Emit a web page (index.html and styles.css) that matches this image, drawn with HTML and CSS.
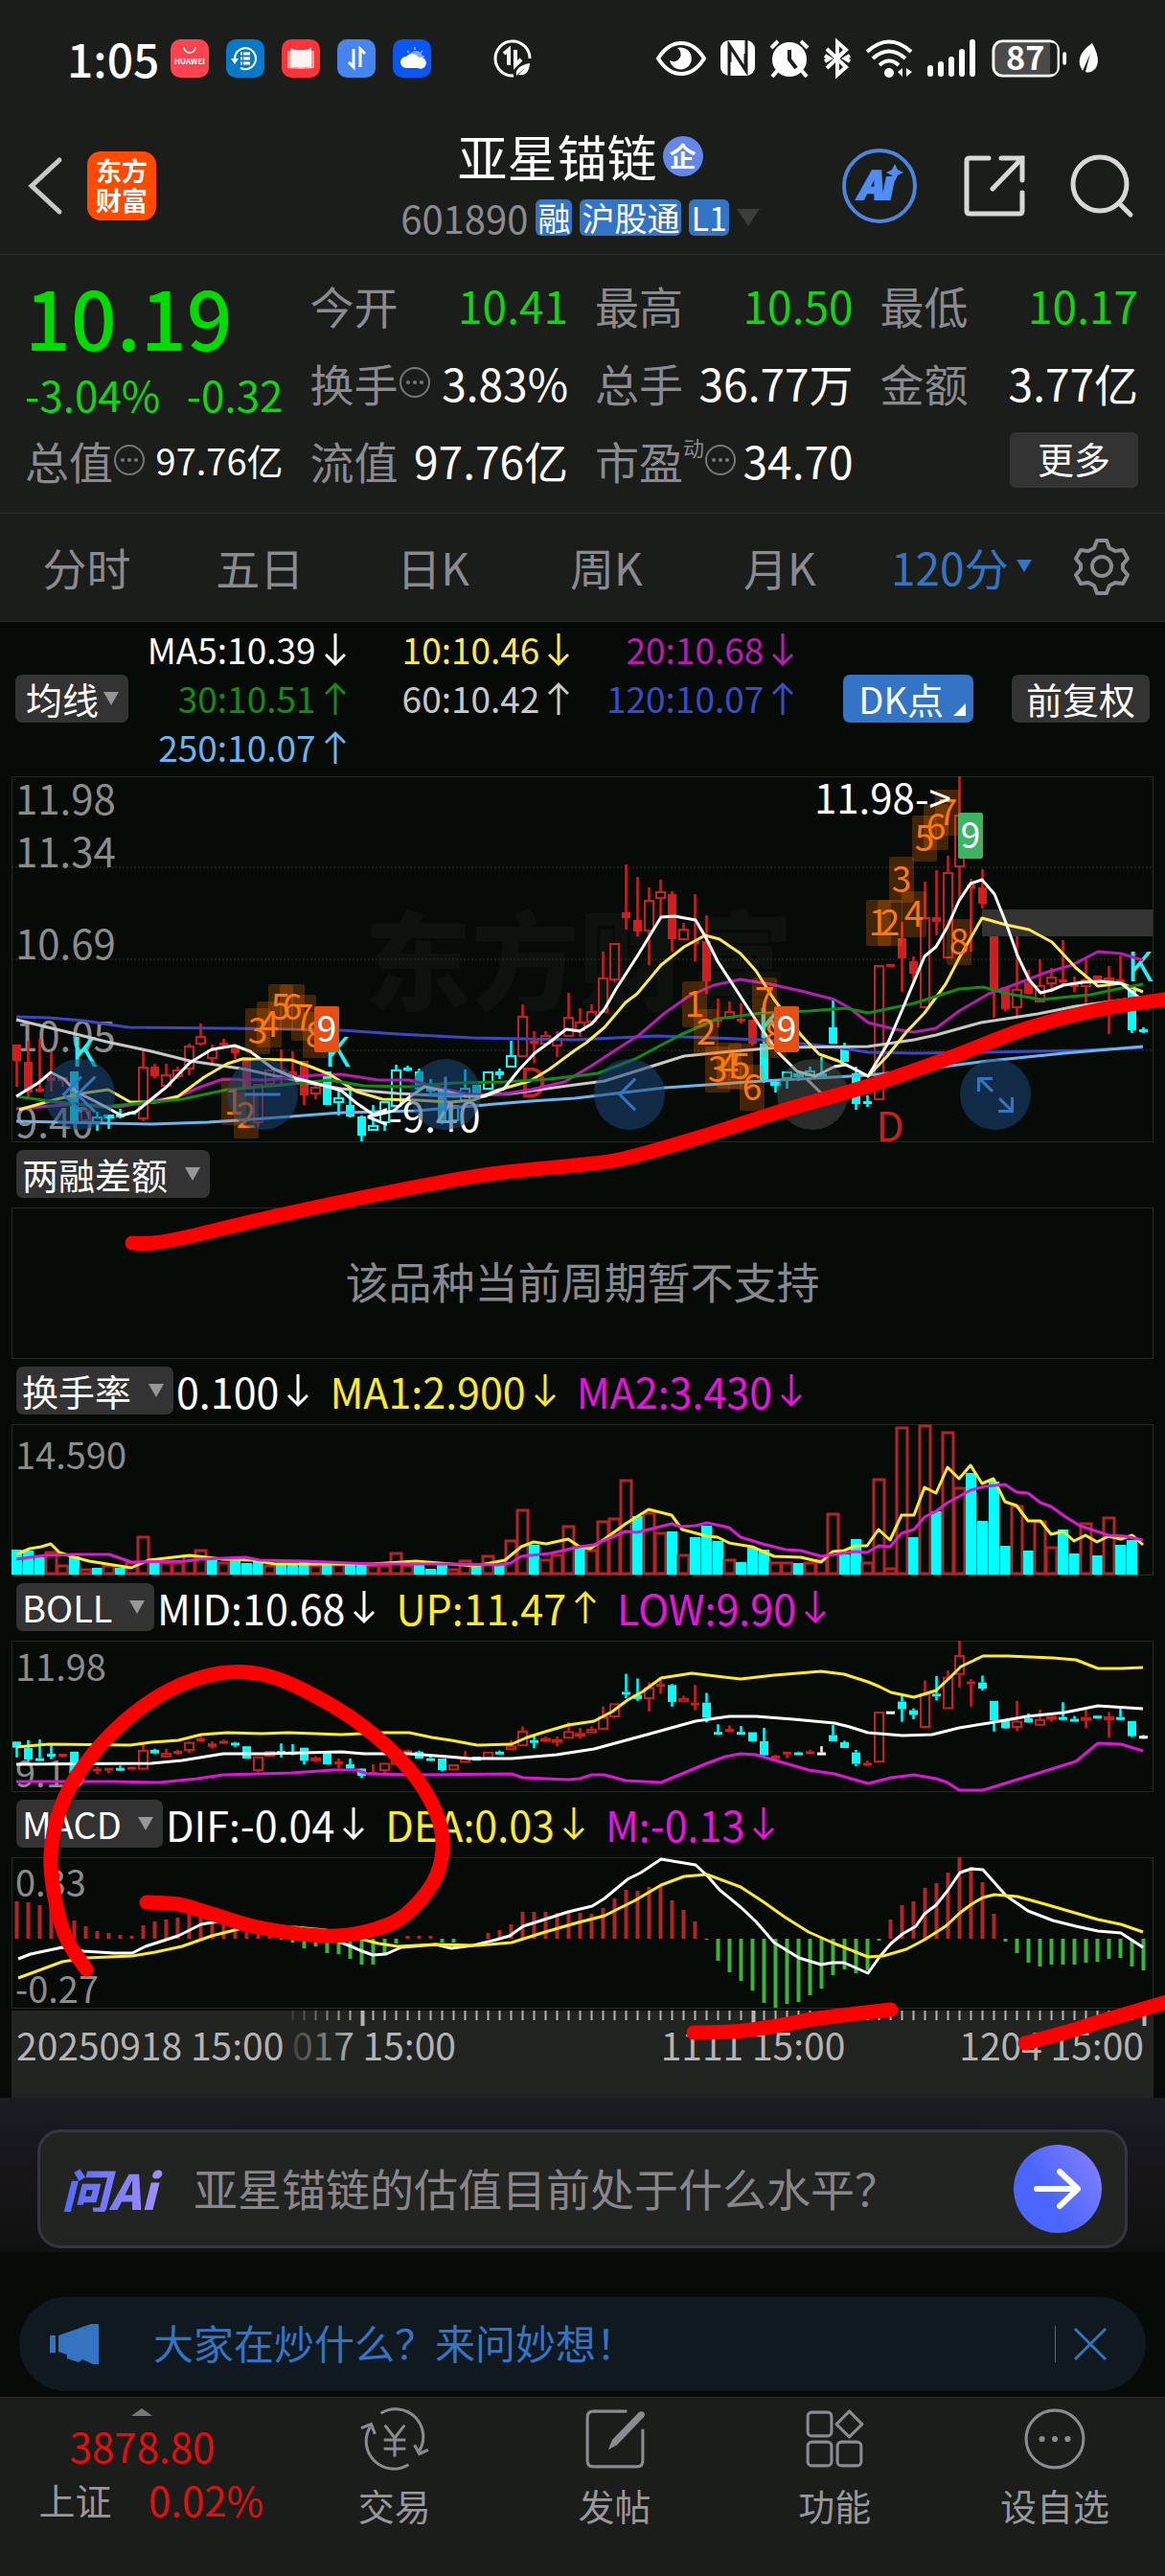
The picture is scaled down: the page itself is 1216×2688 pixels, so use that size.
FILE: index.html
```html
<!DOCTYPE html>
<html lang="zh-CN">
<head>
    <meta charset="UTF-8">
    <meta name="viewport" content="width=device-width, initial-scale=1.0">
    <title>亚星锚链 601890</title>
    <link rel="stylesheet" href="styles.css">
</head>
<body>
    <svg class="symbols" aria-hidden="true">
        <symbol id="down" viewBox="0 0 22 36"><path d="M11 1v32M1 23l10 10 10-10" fill="none" stroke="currentColor" stroke-width="3"/></symbol>
        <symbol id="up" viewBox="0 0 22 36"><path d="M11 35V3M1 13L11 3l10 10" fill="none" stroke="currentColor" stroke-width="3"/></symbol>
        <symbol id="info" viewBox="0 0 34 34"><circle cx="17" cy="17" r="15" fill="none" stroke="currentColor" stroke-width="2"/><circle cx="10" cy="17" r="2" fill="currentColor"/><circle cx="17" cy="17" r="2" fill="currentColor"/><circle cx="24" cy="17" r="2" fill="currentColor"/></symbol>
    </svg>

    <div class="status-bar">
        <span class="clock">1:05</span>
        <div class="app-icons">
            <svg viewBox="0 0 40 40"><rect width="40" height="40" rx="10" fill="#fb444f"/><path d="M14 8a6 6 0 0 0 12 0" fill="none" stroke="#fff" stroke-width="1.5"/><text x="20" y="26" font-size="8" font-weight="bold" fill="#fff" text-anchor="middle">HUAWEI</text></svg>
            <svg viewBox="0 0 40 40"><rect width="40" height="40" rx="10" fill="#067ac6"/><path d="M9 21a11 11 0 1 1 6 9" fill="none" stroke="#fff" stroke-width="2"/><path d="M5 20h8l-4 6z" fill="#fff"/><path d="M15 15h2M15 20h2M15 25h2M18 15h7M18 20h7M18 25h7" stroke="#fff" stroke-width="3"/></svg>
            <svg viewBox="0 0 40 40"><rect width="40" height="40" rx="10" fill="#fc3439"/><path d="M6 12h28v18q-7 1-14 1t-14-1z" fill="#ff9a96"/><path d="M9 9q5 3 11 2 6 1 11-2v21q-6-2-11 0-5-2-11 0z" fill="#fff4f0"/></svg>
            <svg viewBox="0 0 40 40"><rect width="40" height="40" rx="10" fill="#4684ee"/><path d="M17 10v19l-5-5M24 29V10l5 5" fill="none" stroke="#fff" stroke-width="3"/></svg>
            <svg viewBox="0 0 40 40"><rect width="40" height="40" rx="10" fill="#0b57f3"/><circle cx="24" cy="19" r="7" fill="#7da9f8"/><path d="M23 8v3M15 12l2 2M31 12l-2 2M30 18h3" stroke="#9dbdf9" stroke-width="1.5"/><path d="M14 30a6 6 0 0 1 0-12 8 8 0 0 1 13 1 6 6 0 1 1-1 11z" fill="#fff"/></svg>
        </div>
        <svg class="data-saver" viewBox="0 0 40 40"><path d="M38 20A18 18 0 1 0 21 38" fill="none" stroke="#fff" stroke-width="3"/><path d="M11 15l5-4v16M23 11v16l6-6" fill="none" stroke="#fff" stroke-width="4"/><path d="M24 38q-2-10 14-13-1 14-12 12l8-8-8 7z" fill="#fff"/></svg>
        <div class="status-icons">
            <svg class="w52" viewBox="0 0 52 40"><path d="M2 20Q12 4 26 4t24 16Q40 36 26 36T2 20z" fill="none" stroke="#fff" stroke-width="4"/><path d="M22 9a11.500 11.500 0 1 1-8 13 7 7 0 0 0 8-13z" fill="#fff"/></svg>
            <svg class="w36" viewBox="0 0 36 40"><rect y="1" width="36" height="37" rx="9" fill="#fff"/><path d="M9 38V6l17 26V15M27 1v32L10 7v17" fill="none" stroke="#1a1d1a" stroke-width="3"/></svg>
            <svg class="w42" viewBox="0 0 42 40"><circle cx="21" cy="21" r="18" fill="#fff"/><path d="M2 9l7-7M40 9l-7-7M8 33l-5 6M34 33l5 6" stroke="#fff" stroke-width="4"/><path d="M21 11v10l7 9" fill="none" stroke="#1a1d1a" stroke-width="4"/></svg>
            <svg class="w28" viewBox="0 0 28 40"><path d="M3 10l20 19-9 8V3l9 8L3 30M1 17l5 3-5 3M27 17l-5 3 5 3" fill="none" stroke="#fff" stroke-width="4"/></svg>
            <svg class="w50" viewBox="0 0 50 40"><path d="M2 13q23-21 46 0M8 20q17-15 34 0M15 27q10-9 20 0" fill="none" stroke="#fff" stroke-width="4"/><circle cx="25" cy="35" r="5" fill="#fff"/><path d="M34 34l5-4v9M43 30v9l6-5z" fill="#fff"/></svg>
            <svg class="w50" viewBox="0 0 50 40"><path d="M3 30v6M14 26v10M25 21v15M36 13v23M47 3v33" stroke="#fff" stroke-width="6" stroke-linecap="round"/></svg>
            <svg class="w84" viewBox="0 0 84 42"><rect x="2" y="2" width="71" height="38" rx="10" fill="#4b4b4b" stroke="#fff" stroke-width="3"/><path d="M64 4h2q6 0 6 7v20q0 7-6 7h-2z" fill="#1a1d1a"/><path d="M80 16v10" stroke="#fff" stroke-width="4" stroke-linecap="round"/><text x="37" y="34" font-size="36" font-weight="bold" fill="#fff" text-anchor="middle">87</text></svg>
            <svg class="w22" viewBox="0 0 22 40"><path d="M16 4q10 18 3 27-5 5-10 3l5-19L6 33Q-4 18 16 4z" fill="#fff"/></svg>
        </div>
    </div>

    <header class="top-bar">
        <div class="top-left">
            <button class="icon-btn" aria-label="返回"><svg class="back" viewBox="0 0 36 60"><path d="M33 3L4 30l29 27" fill="none" stroke="#c8c8c8" stroke-width="5" stroke-linecap="round"/></svg></button>
            <a class="logo" href="#">东方<br>财富</a>
        </div>
        <div class="stock">
            <h1>亚星锚链<span class="corp">企</span></h1>
            <div class="stock-code">
                <span>601890</span>
                <span class="tag">融</span><span class="tag">沪股通</span><span class="tag">L1</span>
                <i class="caret"></i>
            </div>
        </div>
        <div class="top-right">
            <button class="icon-btn" aria-label="AI"><svg class="ai-icon" viewBox="0 0 80 80"><circle cx="40" cy="40" r="37" fill="none" stroke="#4a86e0" stroke-width="4"/><text class="ai-text" x="36" y="54" font-size="40" text-anchor="middle">Aı</text><path d="M56 17l3 6 6 3-6 3-3 6-3-6-6-3 6-3z" fill="#4f8df0"/></svg></button>
            <button class="icon-btn" aria-label="分享"><svg class="tool" viewBox="0 0 64 64"><path d="M26 3H6q-3 0-3 3v52q0 3 3 3h52q3 0 3-3V39M61 26V3H39M61 3L30 35" fill="none" stroke="#d8d8d8" stroke-width="5" stroke-linecap="round"/></svg></button>
            <button class="icon-btn" aria-label="搜索"><svg class="tool" viewBox="0 0 64 64"><circle cx="30" cy="30" r="28" fill="none" stroke="#d8d8d8" stroke-width="5"/><path d="M50 50l12 12" stroke="#d8d8d8" stroke-width="5" stroke-linecap="round"/></svg></button>
        </div>
    </header>

    <section class="quote">
        <div class="price">
            <strong>10.19</strong>
            <div class="change"><span>-3.04%</span><span>-0.32</span></div>
        </div>
        <div class="cell"><span>今开</span><b class="green">10.41</b></div>
        <div class="cell"><span>最高</span><b class="green">10.50</b></div>
        <div class="cell"><span>最低</span><b class="green">10.17</b></div>
        <div class="cell"><span>换手</span><svg class="info"><use href="#info"/></svg><b>3.83%</b></div>
        <div class="cell"><span>总手</span><b>36.77万</b></div>
        <div class="cell"><span>金额</span><b>3.77亿</b></div>
        <div class="cell"><span>总值</span><svg class="info"><use href="#info"/></svg><b class="small">97.76亿</b></div>
        <div class="cell"><span>流值</span><b>97.76亿</b></div>
        <div class="cell"><span>市盈<sup>动</sup></span><svg class="info"><use href="#info"/></svg><b>34.70</b></div>
        <div class="cell"><button class="more">更多</button></div>
    </section>

    <nav class="tabs">
        <a href="#">分时</a>
        <a href="#">五日</a>
        <a href="#">日K</a>
        <a href="#">周K</a>
        <a href="#">月K</a>
        <span class="period"><select aria-label="周期"><option>120分</option></select></span>
        <button class="icon-btn" aria-label="设置"><svg class="gear" viewBox="0 0 60 60"><path d="M25 3h10l3 8 6 3 8-1 5 9-5 6v5l5 6-5 9-8-1-6 3-3 8H25l-3-8-6-3-8 1-5-9 5-6v-5l-5-6 5-9 8 1 6-3z" fill="none" stroke="#8a8a90" stroke-width="4" stroke-linejoin="round"/><circle cx="30" cy="30" r="10" fill="none" stroke="#8a8a90" stroke-width="4"/></svg></button>
    </nav>

    <main>
        <div class="ma-row">
            <span class="picker tight"><select aria-label="主图指标"><option>均线</option></select></span>
            <div class="ma-list">
                <span class="c-white">MA5:10.39<svg class="arrow"><use href="#down"/></svg></span>
                <span class="c-ma10">10:10.46<svg class="arrow"><use href="#down"/></svg></span>
                <span class="c-ma20">20:10.68<svg class="arrow"><use href="#down"/></svg></span>
                <span class="c-ma30">30:10.51<svg class="arrow"><use href="#up"/></svg></span>
                <span class="c-ma60">60:10.42<svg class="arrow"><use href="#up"/></svg></span>
                <span class="c-ma120">120:10.07<svg class="arrow"><use href="#up"/></svg></span>
                <span class="c-ma250">250:10.07<svg class="arrow"><use href="#up"/></svg></span>
            </div>
            <button class="chip dk">DK点</button>
            <button class="chip">前复权</button>
        </div>
        <div class="frame main-frame">
            <svg id="kline" viewBox="13 1 1190 380"></svg>
            <div class="chart-tools">
                <button aria-label="最早"><svg viewBox="0 0 72 72"><path d="M38 18L20 36l18 18M52 18L34 36l18 18"/></svg></button>
                <button aria-label="缩小"><svg viewBox="0 0 72 72"><path d="M18 36h36"/></svg></button>
                <button aria-label="放大"><svg viewBox="0 0 72 72"><path d="M18 36h36M36 18v36"/></svg></button>
                <button aria-label="左移"><svg viewBox="0 0 72 72"><path d="M42 20L26 36l16 16"/></svg></button>
                <button class="off" aria-label="右移"><svg viewBox="0 0 72 72"><path d="M30 20l16 16-16 16"/></svg></button>
                <button aria-label="全屏"><svg viewBox="0 0 72 72"><path d="M19 33V20h14M20 20l13 13M53 39v14H39M53 53L40 40"/></svg></button>
            </div>
        </div>

        <div class="ind-head">
            <span class="picker"><select aria-label="副图一"><option>两融差额</option></select></span>
        </div>
        <div class="frame empty">该品种当前周期暂不支持</div>

        <div class="ind-head">
            <span class="picker"><select aria-label="副图二"><option>换手率</option></select></span>
            <span class="c-white">0.100<svg class="arrow"><use href="#down"/></svg></span>
            <span class="c-yellow">MA1:2.900<svg class="arrow"><use href="#down"/></svg></span>
            <span class="c-pink">MA2:3.430<svg class="arrow"><use href="#down"/></svg></span>
        </div>
        <div class="frame"><svg id="turnover" viewBox="13 1 1190 156"></svg></div>

        <div class="ind-head">
            <span class="picker"><select aria-label="副图三"><option>BOLL</option></select></span>
            <span class="c-white">MID:10.68<svg class="arrow"><use href="#down"/></svg></span>
            <span class="c-yellow">UP:11.47<svg class="arrow"><use href="#up"/></svg></span>
            <span class="c-pink">LOW:9.90<svg class="arrow"><use href="#down"/></svg></span>
        </div>
        <div class="frame"><svg id="boll" viewBox="13 1 1190 156"></svg></div>

        <div class="ind-head">
            <span class="picker"><select aria-label="副图四"><option>MACD</option></select></span>
            <span class="c-white">DIF:-0.04<svg class="arrow"><use href="#down"/></svg></span>
            <span class="c-yellow">DEA:0.03<svg class="arrow"><use href="#down"/></svg></span>
            <span class="c-pink">M:-0.13<svg class="arrow"><use href="#down"/></svg></span>
        </div>
        <div class="frame"><svg id="macd" viewBox="13 1 1190 156"></svg></div>
        <div class="time-axis"><svg id="axis" viewBox="12 0 1192 91"></svg></div>
    </main>

    <section class="ask">
        <form class="ask-box">
            <label class="ask-logo" for="question">问Ai</label>
            <input type="text" id="question" placeholder="亚星锚链的估值目前处于什么水平？">
            <button type="button" aria-label="发送"><svg viewBox="0 0 92 92"><path d="M24 46h42M48 28l19 18-19 18" fill="none" stroke="#fff" stroke-width="6" stroke-linecap="round" stroke-linejoin="round"/></svg></button>
        </form>
    </section>

    <aside class="notice">
        <svg class="horn" viewBox="0 0 52 44"><path d="M0 13h6v18H0zM9 13l34-12h8v42h-6l-11-5-4 3-12-4v-4l-9-3z" fill="#3373c0"/></svg>
        <a href="#">大家在炒什么？来问妙想！</a>
        <button class="icon-btn close" aria-label="关闭"><svg viewBox="0 0 36 36"><path d="M2 2l32 32M34 2L2 34" stroke="#3373c0" stroke-width="3"/></svg></button>
    </aside>

    <footer class="bottom-nav">
        <a class="index" href="#">
            <i class="caret-up"></i>
            <b>3878.80</b>
            <span>上证</span><em>0.02%</em>
        </a>
        <a href="#"><svg viewBox="0 0 70 64"><path d="M21 6a28 28 0 0 1 39 38M49 58A28 28 0 0 1 10 20M1 21l10-4 4 10M69 43l-9 4-5-9M25 18l10 13 10-13M35 31v19M24 33h22M24 42h22" fill="none" stroke="#8a8a90" stroke-width="3"/></svg>交易</a>
        <a href="#"><svg viewBox="0 0 64 64"><path d="M44 4H10q-6 0-6 6v44q0 6 6 6h44q6 0 6-6V22" fill="none" stroke="#8a8a90" stroke-width="3"/><path d="M25 43l4-10L56 5q3-2 5 0t0 5L34 38z" fill="#8a8a90"/></svg>发帖</a>
        <a href="#"><svg viewBox="0 0 64 64"><g fill="none" stroke="#8a8a90" stroke-width="3"><rect x="5" y="5" width="24" height="24" rx="4"/><rect x="5" y="35" width="24" height="24" rx="4"/><rect x="35" y="35" width="24" height="24" rx="4"/><path d="M47 4l13 13-13 13-13-13z" stroke-linejoin="round"/></g></svg>功能</a>
        <a href="#"><svg viewBox="0 0 64 64"><circle cx="32" cy="32" r="29" fill="none" stroke="#8a8a90" stroke-width="3"/><g fill="#8a8a90"><circle cx="19" cy="32" r="3"/><circle cx="32" cy="32" r="3"/><circle cx="45" cy="32" r="3"/></g></svg>设自选</a>
    </footer>

    <svg id="marker" class="marker" viewBox="0 0 1216 2688" aria-hidden="true"></svg>

    <script src="script.js"></script>
</body>
</html>
```
FILE: styles.css
```css
:root {
    --panel: #1a1d1a;
    --bg: #060b08;
    --line: #2b2d2b;
    --muted: #8a8a90;
    --blue: #3375c4;
    --green: #12d412;
    --chip: #333333;
}

* {
    margin: 0;
    padding: 0;
    box-sizing: border-box;
}

body {
    position: relative;
    background-color: var(--bg);
    color: #fff;
    font-family: "Noto Sans CJK SC", "Noto Sans", sans-serif;
    font-size: 38px;
    line-height: 48px;
}

a {
    color: inherit;
    text-decoration: none;
}

button, select, input {
    font: inherit;
    color: inherit;
    background: none;
    border: none;
    outline: none;
}

select {
    appearance: none;
}

svg {
    display: block;
    overflow: visible;
}

.symbols {
    position: absolute;
    width: 0;
    height: 0;
}

.icon-btn {
    display: flex;
    align-items: center;
    justify-content: center;
}

/* status bar */
.status-bar {
    display: flex;
    align-items: center;
    height: 122px;
    padding: 0 70px;
    background-color: var(--panel);
}

.status-bar svg {
    height: 40px;
}

.clock {
    width: 108px;
    padding-bottom: 3px;
    font-size: 48px;
    font-weight: 500;
}

.app-icons {
    display: flex;
    gap: 18px;
}

.app-icons svg {
    width: 40px;
}

.data-saver {
    width: 40px;
    margin-left: 65px;
}

.status-icons {
    display: flex;
    gap: 15px;
    margin-left: auto;
}

.w22 { width: 22px; margin-left: -8px; }
.w28 { width: 28px; }
.w36 { width: 36px; }
.w42 { width: 42px; }
.w50 { width: 50px; }
.w52 { width: 52px; }
.w84 { width: 84px; }

/* title bar */
.top-bar {
    display: grid;
    grid-template-columns: 1fr auto 1fr;
    align-items: center;
    height: 144px;
    padding: 0 34px 0 29px;
    background-color: var(--panel);
    border-bottom: 1px solid var(--line);
}

.top-left, .top-right {
    display: flex;
    align-items: center;
}

.top-left {
    gap: 26px;
}

.top-right {
    justify-content: flex-end;
    gap: 48px;
}

.back {
    width: 36px;
    height: 60px;
}

.logo {
    width: 72px;
    height: 72px;
    padding-top: 4px;
    border-radius: 14px;
    background-color: #ff4a00;
    font-size: 27px;
    line-height: 31px;
    font-weight: bold;
    text-align: center;
}

.stock h1 {
    display: flex;
    align-items: center;
    justify-content: center;
    gap: 6px;
    font-size: 52px;
    font-weight: 400;
    line-height: 66px;
}

.corp {
    width: 42px;
    height: 42px;
    border-radius: 50%;
    background-color: #6488ea;
    font-size: 28px;
    font-weight: bold;
    line-height: 40px;
    text-align: center;
}

.stock-code {
    display: flex;
    align-items: center;
    gap: 8px;
    font-size: 40px;
    line-height: 62px;
    color: var(--muted);
}

.tag {
    padding: 0 2px;
    border-radius: 6px;
    background-color: var(--blue);
    color: #fff;
    font-size: 34px;
    line-height: 38px;
}

.caret {
    border: 12px solid transparent;
    border-top: 18px solid #3c3c3c;
    border-bottom: none;
}

.ai-icon {
    width: 80px;
    height: 80px;
}

.ai-text {
    fill: #4f8df0;
    stroke: #4f8df0;
    stroke-width: 2px;
    font-weight: 900;
    font-style: italic;
}

.tool {
    width: 64px;
    height: 64px;
}

/* quote */
.quote {
    display: grid;
    grid-template-columns: repeat(4, 1fr);
    grid-auto-rows: 81px;
    column-gap: 28px;
    padding: 11px 28px 15px 26px;
    background-color: var(--panel);
    border-bottom: 1px solid var(--line);
}

.price {
    grid-row: span 2;
    color: #00dc00;
}

.price strong {
    display: block;
    font-size: 84px;
    font-weight: 500;
    line-height: 106px;
}

.change {
    display: flex;
    justify-content: space-between;
    font-size: 44px;
    line-height: 56px;
    color: var(--green);
}

.cell {
    display: flex;
    align-items: center;
    font-size: 46px;
}

.cell span {
    color: var(--muted);
}

.cell b {
    margin-left: auto;
    font-weight: 400;
}

.cell .small {
    font-size: 38px;
}

.cell sup {
    font-size: 22px;
    line-height: 22px;
    vertical-align: 24px;
}

.cell .green {
    color: var(--green);
}

.info {
    width: 34px;
    height: 34px;
    color: #77777b;
}

.more {
    width: 134px;
    height: 58px;
    margin-left: auto;
    padding-bottom: 4px;
    border-radius: 6px;
    background-color: var(--chip);
    font-size: 38px;
    line-height: 48px;
}

/* period tabs */
.tabs {
    display: grid;
    grid-template-columns: repeat(6, 1fr) 131px;
    align-items: center;
    height: 113px;
    padding-bottom: 3px;
    background-color: var(--panel);
    border-bottom: 1px solid var(--line);
    color: var(--muted);
    font-size: 46px;
    text-align: center;
}

.period {
    display: flex;
    align-items: center;
    justify-content: center;
    gap: 8px;
    padding-left: 18px;
    color: var(--blue);
}

.period::after {
    content: "";
    border: 8px solid transparent;
    border-top: 13px solid var(--blue);
    border-bottom: none;
}

.gear {
    width: 60px;
    height: 60px;
}

/* chart area */
main {
    padding: 0 12px;
}

.ma-row {
    display: flex;
    align-items: center;
    padding: 3px 4px 5px;
}

.picker {
    display: flex;
    align-items: center;
    gap: 18px;
    height: 50px;
    padding: 0 10px 0 6px;
    border-radius: 7px;
    background-color: var(--chip);
}

.picker::after {
    content: "";
    border: 8px solid transparent;
    border-top: 14px solid #97979b;
    border-bottom: none;
}

.picker.tight {
    gap: 4px;
    padding-left: 11px;
}

.ma-list {
    display: grid;
    flex: 1;
    grid-template-columns: 31fr 32fr 32fr;
    font-size: 37px;
    line-height: 51px;
}

.ma-list span, .ind-head span {
    display: flex;
    align-items: center;
    justify-content: flex-end;
    gap: 9px;
}

.arrow {
    width: 22px;
    height: 36px;
}

.chip {
    height: 50px;
    padding: 0 15px;
    margin-left: 40px;
    border-radius: 7px;
    background-color: var(--chip);
}

.chip.dk {
    display: flex;
    align-items: center;
    gap: 10px;
    margin-left: 52px;
    padding: 0 8px 0 16px;
    background-color: var(--blue);
}

.chip.dk::after {
    content: "";
    align-self: flex-end;
    margin-bottom: 7px;
    border-left: 13px solid transparent;
    border-bottom: 13px solid #fff;
}

.frame {
    border: 1px solid #262826;
}

.frame svg {
    width: 100%;
    height: auto;
}

.main-frame {
    position: relative;
}

/* round buttons float over the candles */
.chart-tools {
    position: absolute;
    left: 33px;
    right: 127px;
    bottom: 12px;
    display: flex;
    justify-content: space-between;
}

.chart-tools button {
    width: 74px;
    height: 74px;
    border-radius: 50%;
    background-color: rgba(28, 70, 122, 0.55);
}

.chart-tools path {
    fill: none;
    stroke: var(--blue);
    stroke-width: 3;
}

.chart-tools .off {
    background-color: rgba(80, 80, 80, 0.5);
}

.chart-tools .off path {
    stroke: #8a8a8a;
}

.ind-head {
    display: flex;
    align-items: center;
    gap: 22px;
    height: 68px;
    padding: 0 0 2px 5px;
    font-size: 43px;
}

.ind-head .picker {
    margin-right: -19px;
    gap: 17px;
    font-size: 38px;
}

.empty {
    display: flex;
    align-items: center;
    justify-content: center;
    height: 158px;
    padding-bottom: 4px;
    color: #88888e;
    font-size: 45px;
}

.time-axis {
    margin-top: 2px;
    background-color: #222422;
}

.axis-text {
    font-size: 39px;
    fill: #b4b4b4;
}

.y-big {
    font-size: 42px;
    fill: #8c8c8c;
}

.y-small {
    font-size: 38px;
    fill: #8c8c8c;
}

.watermark {
    font-size: 112px;
    font-weight: 900;
    fill: #0e120f;
}

.kd {
    font-size: 42px;
    text-anchor: middle;
}

.count {
    font-size: 37px;
    text-anchor: middle;
}

.c-white { color: #fff; }
.c-ma10 { color: #fdea50; }
.c-ma20 { color: #b81cb0; }
.c-ma30 { color: #158a15; }
.c-ma60 { color: #c8c8c8; }
.c-ma120 { color: #3a4bc8; }
.c-ma250 { color: #6cb4f0; }
.c-yellow { color: #fdea28; }
.c-pink { color: #e814dc; }

/* ask AI */
.ask {
    padding: 33px 39px 4px;
    background: linear-gradient(#1a1d21, #171720 30%, #171518 50%, #101110);
}

.ask-box {
    display: flex;
    align-items: center;
    height: 124px;
    padding: 0 24px 0 22px;
    border: 3px solid #353442;
    border-radius: 24px;
    background-color: #222422;
}

.ask-logo {
    width: 138px;
    font-size: 50px;
    font-weight: 900;
    font-style: italic;
    background: linear-gradient(90deg, #5068ff, #a890f8 80%);
    background-clip: text;
    color: transparent;
}

.ask-box input {
    flex: 1;
    min-width: 0;
    padding-bottom: 4px;
    font-size: 46px;
}

.ask-box input::placeholder {
    color: #88868a;
    opacity: 1;
}

.ask-box button {
    width: 92px;
    height: 92px;
    border-radius: 50%;
    background: linear-gradient(60deg, #4a66ff 40%, #8a82ff);
}

/* notice */
.notice {
    display: flex;
    align-items: center;
    height: 98px;
    margin: 47px 20px 6px;
    padding: 0 40px 0 32px;
    border-radius: 49px;
    background-color: #101820;
    color: var(--blue);
    font-size: 42px;
}

.horn {
    width: 52px;
    height: 44px;
    margin-right: 56px;
}

.notice a {
    padding-bottom: 4px;
}

.close {
    height: 38px;
    margin-left: auto;
    padding-left: 18px;
    border-left: 1px solid var(--blue);
}

.close svg {
    width: 36px;
    height: 36px;
}

/* bottom navigation */
.bottom-nav {
    display: grid;
    grid-template-columns: 297px repeat(4, 1fr);
    height: 187px;
    background-color: var(--panel);
    border-top: 1px solid var(--line);
    color: #98989c;
}

.bottom-nav a {
    display: flex;
    flex-direction: column;
    align-items: center;
    gap: 12px;
    padding-top: 10px;
}

.bottom-nav svg {
    height: 66px;
    width: 72px;
}

.bottom-nav .index {
    display: grid;
    grid-template-columns: 2fr 3fr;
    grid-template-rows: 8px 62px 50px;
    gap: 0;
    justify-items: center;
    align-items: center;
    padding: 11px 0 0 24px;
}

.index b, .index em {
    color: #e01010;
    font-size: 42px;
    font-weight: 400;
    font-style: normal;
}

.index b {
    grid-column: span 2;
    margin-right: 24px;
}

.caret-up {
    grid-column: span 2;
    margin-right: 24px;
    border: 11px solid transparent;
    border-bottom: 8px solid #77777b;
    border-top: none;
}

/* hand-drawn marks across the whole page */
.marker {
    position: absolute;
    top: 0;
    left: 0;
    width: 100%;
    height: auto;
    overflow: hidden;
    pointer-events: none;
}

.marker path {
    fill: none;
    stroke: #ff0000;
    stroke-width: 15;
    stroke-linecap: round;
}
```
FILE: script.js
```js
const RED = '#c82020';
const CYAN = '#00ffff';
const STEP = 12;
const START = 17.5;

function xAt(i) {
    return START + i * STEP;
}

function line(points, color, width = 3) {
    return `<polyline points="${points}" fill="none" stroke="${color}" stroke-width="${width}" stroke-linejoin="round"/>`;
}

function label(x, y, text, cls, extra = '') {
    return `<text x="${x}" y="${y}" class="${cls}" ${extra}>${text}</text>`;
}

// kind: R / C / W are filled, r / c are hollow
function candle(i, kind, high, top, bottom, low, k = 1) {
    const x = xAt(i);
    const colors = { R: '#d81c1c', r: RED, C: CYAN, c: CYAN, W: '#fff' };
    const color = colors[kind];
    const t = top * k;
    const h = Math.max((bottom - top) * k, 3);
    let out = '';
    if (high < top) out += `<path d="M${x} ${high * k}V${t}" stroke="${color}" stroke-width="2.5"/>`;
    if (low > bottom) out += `<path d="M${x} ${t + h}V${low * k}" stroke="${color}" stroke-width="2.5"/>`;
    if (kind === 'r' || kind === 'c') {
        out += `<rect x="${x - 4.5}" y="${t + 1}" width="9" height="${Math.max(h - 2, 2)}" fill="none" stroke="${color}" stroke-width="2"/>`;
    } else {
        out += `<rect x="${x - 4.5}" y="${t}" width="9" height="${h}" fill="${color}"/>`;
    }
    return out;
}

// kind, high, body top, body bottom, low
const candles = [
    ['R', 280, 280, 297, 324], ['R', 276, 298, 330, 335], ['R', 274, 326, 329, 330], ['R', 287, 314, 318, 329], ['r', 314, 314, 318, 324],
    ['C', 308, 308, 360, 360], ['r', 348, 348, 360, 360], ['c', 350, 355, 362, 370], ['c', 353, 353, 357, 368], ['C', 347, 353, 356, 357],
    ['C', 350, 350, 352, 352], ['r', 285, 303, 358, 360], ['R', 300, 303, 313, 315], ['r', 300, 311, 324, 324], ['r', 303, 306, 314, 316],
    ['r', 279, 281, 306, 312], ['r', 258, 271, 280, 281], ['r', 280, 285, 295, 300], ['R', 274, 278, 281, 283], ['R', 281, 283, 289, 295],
    ['R', 293, 293, 327, 327], ['r', 321, 321, 362, 366], ['r', 306, 306, 322, 322], ['R', 285, 306, 309, 324], ['R', 287, 308, 312, 318],
    ['R', 297, 297, 333, 343], ['r', 320, 324, 332, 337], ['C', 308, 308, 343, 343], ['c', 327, 335, 341, 354], ['C', 327, 343, 355, 356],
    ['C', 354, 355, 375, 381], ['c', 343, 364, 370, 370], ['c', 339, 339, 362, 370], ['c', 301, 306, 345, 345], ['C', 302, 304, 306, 308],
    ['C', 305, 308, 327, 327], ['C', 316, 326, 328, 333], ['C', 327, 327, 359, 363], ['c', 343, 343, 360, 360], ['c', 306, 325, 339, 339],
    ['C', 322, 322, 333, 333], ['c', 308, 308, 327, 327], ['C', 305, 308, 312, 316], ['c', 276, 291, 304, 304], ['r', 238, 250, 293, 293],
    ['R', 266, 276, 278, 299], ['r', 266, 270, 280, 282], ['r', 266, 273, 282, 293], ['r', 226, 251, 272, 272], ['r', 242, 256, 266, 272],
    ['r', 238, 245, 257, 257], ['r', 183, 210, 247, 247], ['r', 174, 174, 213, 215], ['R', 92, 142, 148, 160], ['R', 105, 150, 162, 167],
    ['r', 116, 129, 162, 197], ['r', 108, 120, 128, 147], ['R', 120, 123, 170, 183], ['r', 153, 159, 171, 171], ['R', 123, 172, 174, 193],
    ['R', 145, 172, 214, 227], ['R', 232, 253, 255, 262], ['r', 235, 245, 253, 253], ['R', 237, 253, 255, 258], ['R', 254, 254, 279, 281],
    ['C', 242, 279, 318, 320], ['c', 317, 319, 322, 330], ['c', 308, 308, 316, 326], ['c', 308, 310, 313, 318], ['c', 303, 307, 313, 313],
    ['c', 293, 310, 312, 312], ['C', 234, 262, 279, 279], ['C', 278, 282, 298, 298], ['C', 303, 310, 342, 348], ['C', 333, 339, 342, 345],
    ['r', 197, 197, 338, 338], ['R', 196, 196, 197, 197], ['R', 152, 169, 190, 225], ['R', 188, 193, 206, 218], ['r', 110, 147, 242, 242],
    ['R', 98, 147, 152, 166], ['r', 83, 100, 190, 190], ['r', 0, 40, 95, 130], ['R', 107, 113, 117, 183], ['R', 97, 116, 133, 138],
    ['R', 167, 167, 222, 252], ['R', 220, 220, 243, 245], ['r', 167, 222, 242, 251], ['R', 202, 215, 227, 228], ['r', 191, 218, 236, 236],
    ['r', 200, 209, 217, 225], ['R', 171, 212, 214, 217], ['R', 209, 217, 219, 225], ['r', 191, 212, 220, 243], ['R', 208, 208, 213, 213],
    ['r', 198, 210, 213, 269], ['R', 187, 212, 214, 216], ['C', 223, 223, 265, 268], ['C', 262, 264, 266, 268]
];

const averages = {
    '#3a46c4': '17,251 51,252 87,255 134,262 237,263 356,265 415,269 494,273 600,275 686,271 745,273 796,275 867,282 906,288 954,289 1032,288 1130,286 1193,283',
    '#6cb4f0': '17,360 158,363 217,361 277,357 356,351 435,349 494,344 554,339 600,336 694,325 796,318 906,312 954,307 1032,297 1111,289 1193,282',
    '#c8c8c8': '17,254 75,268 111,277 158,287 198,297 257,306 316,319 356,326 415,331 474,334 534,331 600,322 631,318 663,308 714,292 765,287 812,283 906,282 954,275 977,270 1024,257 1083,248 1123,240 1189,231',
    '#b81cb0': '17,347 79,342 123,345 158,339 186,334 210,324 233,316 277,317 328,312 356,311 395,317 427,317 467,327 490,332 522,332 554,327 589,319 616,303 639,288 667,270 694,247 718,230 745,218 773,212 804,217 836,224 871,233 887,242 906,257 934,264 954,267 977,263 1001,245 1032,227 1052,220 1091,205 1119,197 1146,183 1170,185 1193,192',
    '#fdea50': '20,348 59,337 85,331 113,327 136,340 162,340 186,334 213,314 237,300 253,295 304,296 324,303 344,311 372,329 399,337 435,338 470,340 494,338 518,328 553,318 573,306 600,286 612,278 631,262 653,236 665,227 690,197 714,178 736,166 751,170 773,185 789,203 808,233 836,270 855,290 875,297 895,307 906,313 926,292 946,267 965,247 987,217 1001,190 1025,148 1050,155 1074,160 1098,173 1123,200 1146,219 1170,216 1193,225',
    '#158a15': '17,334 59,340 107,345 158,340 190,337 237,327 285,323 344,317 380,323 427,324 474,320 526,319 573,316 600,313 624,310 663,295 710,270 749,253 796,247 844,245 883,242 906,247 954,237 1001,222 1026,220 1052,227 1087,233 1138,228 1166,222 1193,217',
    '#ffffff': '17,334 40,320 53,309 67,316 79,329 99,339 127,354 142,350 158,337 174,324 198,299 221,285 245,281 261,287 285,305 308,315 336,322 356,328 372,341 391,354 411,349 427,335 443,324 463,328 486,334 506,334 526,326 542,306 558,289 573,278 591,264 605,266 618,258 631,243 643,222 665,188 690,147 704,146 726,150 736,167 749,193 773,230 796,265 812,288 832,308 851,313 871,303 883,301 906,313 926,280 942,243 965,188 977,178 989,157 1001,130 1013,112 1025,108 1038,123 1050,153 1062,187 1074,212 1086,226 1098,223 1110,218 1130,215 1150,214 1170,216 1189,231'
};

// nine-turn counters: number, x, y
const counts = [
    [1, 244, 340], [2, 257, 354], [3, 269, 266], [4, 281, 259], [5, 293, 241], [6, 305, 241], [7, 317, 252], [8, 329, 270], [9, 341, 264],
    [1, 725, 238], [2, 737, 267], [3, 749, 306], [4, 761, 302], [5, 773, 303], [6, 785, 325], [7, 798, 234], [8, 808, 270], [9, 821, 264],
    [1, 917, 153], [2, 929, 153], [3, 941, 108], [4, 954, 144], [5, 965, 65], [6, 977, 53], [7, 989, 38], [8, 1001, 173], [9, 1013, 62, '#3cb464']
];

function drawKline() {
    let out = label(380, 236, '东方财富', 'watermark');
    [95, 191, 286].forEach(y => {
        out += `<path d="M12 ${y}H1204" stroke="#303230" stroke-dasharray="2 2"/>`;
    });
    out += '<rect x="1025" y="139" width="178" height="28" fill="#333"/>';
    [[40, '11.98'], [95, '11.34'], [191, '10.69'], [287, '10.05'], [377, '9.40']].forEach(([y, t]) => {
        out += label(16, y, t, 'y-big');
    });
    [[88, 303], [352, 303], [804, 273], [1190, 214]].forEach(([x, y]) => {
        out += label(x, y, 'K', 'kd', 'fill="#28f0f0"');
    });
    [[556, 335], [929, 381]].forEach(([x, y]) => {
        out += label(x, y, 'D', 'kd', 'fill="#c82020"');
    });
    candles.forEach((c, i) => {
        out += candle(i, ...c);
    });
    Object.entries(averages).forEach(([color, pts]) => {
        out += line(pts, color);
    });
    counts.forEach(([n, x, y, color]) => {
        const solid = n === 9;
        out += `<rect x="${x - 13}" y="${y - 24}" width="26" height="48" rx="2" fill="${solid ? color || '#e65014' : 'rgba(255,110,0,0.25)'}"/>`;
        out += label(x, y + 13, n, 'count', `fill="${solid ? '#fff' : '#ff7a0c'}"`);
    });
    out += label(382, 371, '&lt;-9.40', 'y-big', 'style="fill:#fff"');
    out += label(850, 39, '11.98-&gt;', 'y-big', 'style="fill:#fff"');
    document.getElementById('kline').innerHTML = out;
}

function drawTurnover() {
    const kinds = 'CCCrrCrCrCrrCrrrrCrCCCrCCCrCrCCrrrrCCCrrCrCrrCrrrCrrrrCrrCrCCCrCCCrrCrrrCCrrrrCrCrrCCCCrCrrCCrCrCCr';
    const tops = [131, 132, 139, 133, 147, 138, 151, 150, 147, 150, 144, 117, 145, 144, 144, 137, 131, 141, 144, 143,
        145, 142, 147, 145, 145, 142, 147, 144, 146, 146, 146, 147, 147, 134, 147, 147, 151, 147, 151, 142,
        147, 137, 146, 121, 89, 126, 141, 136, 106, 129, 131, 101, 98, 58, 96, 92, 113, 112, 136, 118,
        106, 122, 141, 144, 129, 131, 144, 144, 145, 144, 141, 93, 136, 120, 144, 57, 150, 3, 118, 1,
        91, 8, 66, 51, 101, 60, 127, 85, 132, 101, 128, 110, 135, 103, 137, 97, 126, 121, 155];
    let out = '';
    tops.forEach((y, i) => {
        const x = xAt(i);
        if (kinds[i] === 'C') {
            out += `<rect x="${x - 5.5}" y="${y}" width="11" height="${157 - y}" fill="${CYAN}"/>`;
        } else {
            out += `<rect x="${x - 5.5}" y="${y + 1}" width="11" height="${155 - y}" fill="none" stroke="#b42424" stroke-width="3"/>`;
        }
    });
    out += label(16, 47, '14.590', 'y-small');
    out += line('17,136 31,130 43,128 53,125 62,134 78,139 93,143 137,150 155,142 198,137 233,141 264,142 287,146 388,146 434,143 496,148 527,142 544,128 557,123 570,125 593,120 605,128 616,130 631,120 653,104 677,89 701,95 712,110 738,117 749,118 761,124 785,128 808,138 836,139 857,144 869,133 881,132 893,127 905,127 917,110 929,121 941,95 954,95 965,66 977,72 989,45 1001,57 1013,43 1025,62 1037,57 1049,81 1061,85 1073,101 1086,101 1097,115 1110,112 1121,122 1133,116 1145,123 1157,117 1170,120 1182,116 1193,126', '#fdea28');
    out += line('17,141 47,137 78,136 114,136 137,144 194,143 209,141 256,139 271,142 318,143 388,146 465,146 520,147 533,145 544,138 574,135 605,128 620,126 653,112 665,113 701,104 710,107 726,106 738,103 761,108 773,118 796,125 820,131 836,132 857,138 893,133 905,134 917,127 929,128 941,114 954,110 965,97 977,91 989,82 1013,69 1028,65 1049,63 1061,71 1073,72 1086,82 1097,86 1111,96 1127,106 1157,116 1174,117 1193,121', '#d81cd0');
    document.getElementById('turnover').innerHTML = out;
}

function drawBoll() {
    const kinds = 'CCCCRCRRRC' + 'RrCrRrRRRC' + 'CrrCCCrCRC' + 'CRrrRCCCrr' + 'CrCrrCrrrr' +
        'rrrCCrRCrR' + 'CCRCCCRRCR' + 'WCCCRrWCCr' + 'CrrRCCCrCr' + 'rCCrCrCCW';
    let out = label(16, 42, '11.98', 'y-small') + label(16, 153, '9.15', 'y-small');
    candles.forEach((c, i) => {
        out += candle(i, kinds[i], c[1], c[2], c[3], c[4], 0.376);
    });
    out += line('17,111 51,108 136,109 158,106 186,104 210,98 237,96 273,97 301,96 356,98 399,96 427,96 451,101 471,104 498,109 534,108 550,101 569,95 593,88 620,84 639,74 655,62 671,53 690,39 722,34 773,40 808,36 857,32 881,35 906,43 918,48 930,54 954,59 977,52 991,39 1003,27 1026,16 1052,16 1099,18 1123,20 1146,29 1170,29 1193,28', '#fdea28');
    out += line('17,129 158,128 190,125 233,118 277,118 356,116 380,118 427,118 467,121 490,123 534,123 581,119 620,113 679,97 726,84 761,79 789,79 828,82 871,86 887,90 906,96 942,99 973,98 1001,91 1032,86 1072,79 1111,75 1146,68 1193,71', '#fff');
    out += line('17,147 115,147 166,148 206,144 233,140 304,138 348,135 372,135 384,139 435,140 534,139 546,143 593,145 605,144 618,140 631,140 653,146 690,148 714,138 738,128 757,121 773,118 789,119 820,128 844,135 871,139 906,149 930,143 954,140 977,144 989,148 1001,156 1026,156 1052,148 1091,136 1123,126 1146,107 1170,108 1193,115', '#e014d8');
    document.getElementById('boll').innerHTML = out;
}

function drawMacd() {
    const zero = 85;
    const ends = [46, 47, 50, 51, 54, 66, 72, 77, 79, 81, 82, 71, 67, 65, 63, 59, 58, 58, 56, 63,
        70, 78, 82, 86, 89, 95, 93, 100, 101, 106, 112, 112, 102, 90, 82, 82, 82, 89, 89, 85,
        85, 79, 76, 70, 57, 57, 57, 58, 57, 58, 59, 53, 43, 34, 35, 31, 29, 45, 55, 67,
        86, 108, 120, 129, 139, 152, 157, 153, 151, 144, 137, 123, 117, 121, 118, 87, 65, 50, 46, 32,
        27, 16, 0, 10, 26, 59, 88, 100, 110, 114, 112, 112, 112, 110, 109, 106, 105, 114, 118];
    let out = label(16, 41, '0.33', 'y-small') + label(16, 152, '-0.27', 'y-small');
    ends.forEach((y, i) => {
        out += `<path d="M${xAt(i)} ${zero}V${y}" stroke="${y < zero ? '#b42424' : '#38b438'}" stroke-width="4"/>`;
    });
    out += line('19,106 32,101 65,94 87,98 119,100 138,100 152,93 186,82 210,70 233,66 277,73 316,78 348,86 364,92 378,98 389,102 403,101 419,94 455,91 471,95 494,92 518,86 532,82 546,72 565,66 593,57 618,51 631,43 655,23 669,16 690,2 726,8 738,19 751,34 773,52 789,67 808,89 834,105 857,112 869,110 881,110 906,121 918,104 930,90 942,80 956,72 965,59 977,50 989,35 1002,16 1014,12 1026,13 1050,40 1073,56 1099,66 1123,72 1146,77 1170,79 1193,94', '#fff');
    out += line('19,126 65,109 91,105 138,103 162,99 190,93 221,82 253,74 308,73 340,76 376,85 395,90 415,93 455,91 498,92 534,89 569,78 600,69 631,61 663,45 690,29 714,20 738,18 773,31 796,46 820,63 844,78 871,90 906,104 922,103 946,96 965,86 987,72 1002,58 1014,49 1026,42 1038,39 1062,41 1091,49 1146,65 1170,70 1193,78', '#fdea28');
    document.getElementById('macd').innerHTML = out;
}

function drawAxis() {
    let out = '<defs><linearGradient id="fade" gradientUnits="userSpaceOnUse" x1="290" y1="0" x2="372" y2="0"><stop offset="0" stop-color="#222422"/><stop offset="1" stop-color="#b4b4b4"/></linearGradient></defs>';
    for (let i = 24; i < 99; i++) {
        const major = (i - 30) % 34 === 0;
        out += `<rect x="${xAt(i) - 1}" y="0" width="${major ? 4 : 2}" height="${major ? 16 : 10}" fill="url(#fade)"/>`;
    }
    out += label(17, 52, '20250918 15:00', 'axis-text');
    out += label(476, 52, '017 15:00', 'axis-text', 'text-anchor="end" style="fill:url(#fade)"');
    out += label(786, 52, '1111 15:00', 'axis-text', 'text-anchor="middle"');
    out += label(1194, 52, '1204 15:00', 'axis-text', 'text-anchor="end"');
    document.getElementById('axis').innerHTML = out;
}

// smooth curve through every point
function curve(p) {
    let d = `M${p[0]}`;
    for (let i = 0; i < p.length - 1; i++) {
        const a = p[i - 1] || p[i];
        const b = p[i];
        const c = p[i + 1];
        const e = p[i + 2] || c;
        d += `C${b[0] + (c[0] - a[0]) / 6} ${b[1] + (c[1] - a[1]) / 6} ${c[0] - (e[0] - b[0]) / 6} ${c[1] - (e[1] - b[1]) / 6} ${c[0]} ${c[1]}`;
    }
    return `<path d="${d}"/>`;
}

function drawMarker() {
    document.getElementById('marker').innerHTML = [
        [[138, 1297], [160, 1297], [194, 1291], [287, 1269], [411, 1243], [512, 1225], [600, 1216], [651, 1209], [726, 1188], [820, 1158], [910, 1132], [993, 1103], [1072, 1073], [1150, 1053], [1230, 1041]],
        [[153, 1985], [186, 1987], [221, 1997], [269, 2011], [336, 2020], [380, 2016], [419, 2001], [451, 1966], [462, 1929], [455, 1891], [427, 1846], [376, 1799], [316, 1763], [273, 1747], [229, 1746], [178, 1763], [130, 1796], [87, 1843], [63, 1887], [53, 1935], [57, 1980], [69, 2022], [90, 2055]],
        [[724, 2121], [765, 2120], [804, 2115], [855, 2106], [895, 2101], [930, 2097]],
        [[1070, 2132], [1111, 2121], [1150, 2109], [1225, 2087]]
    ].map(curve).join('');
}

drawKline();
drawTurnover();
drawBoll();
drawMacd();
drawAxis();
drawMarker();
```
